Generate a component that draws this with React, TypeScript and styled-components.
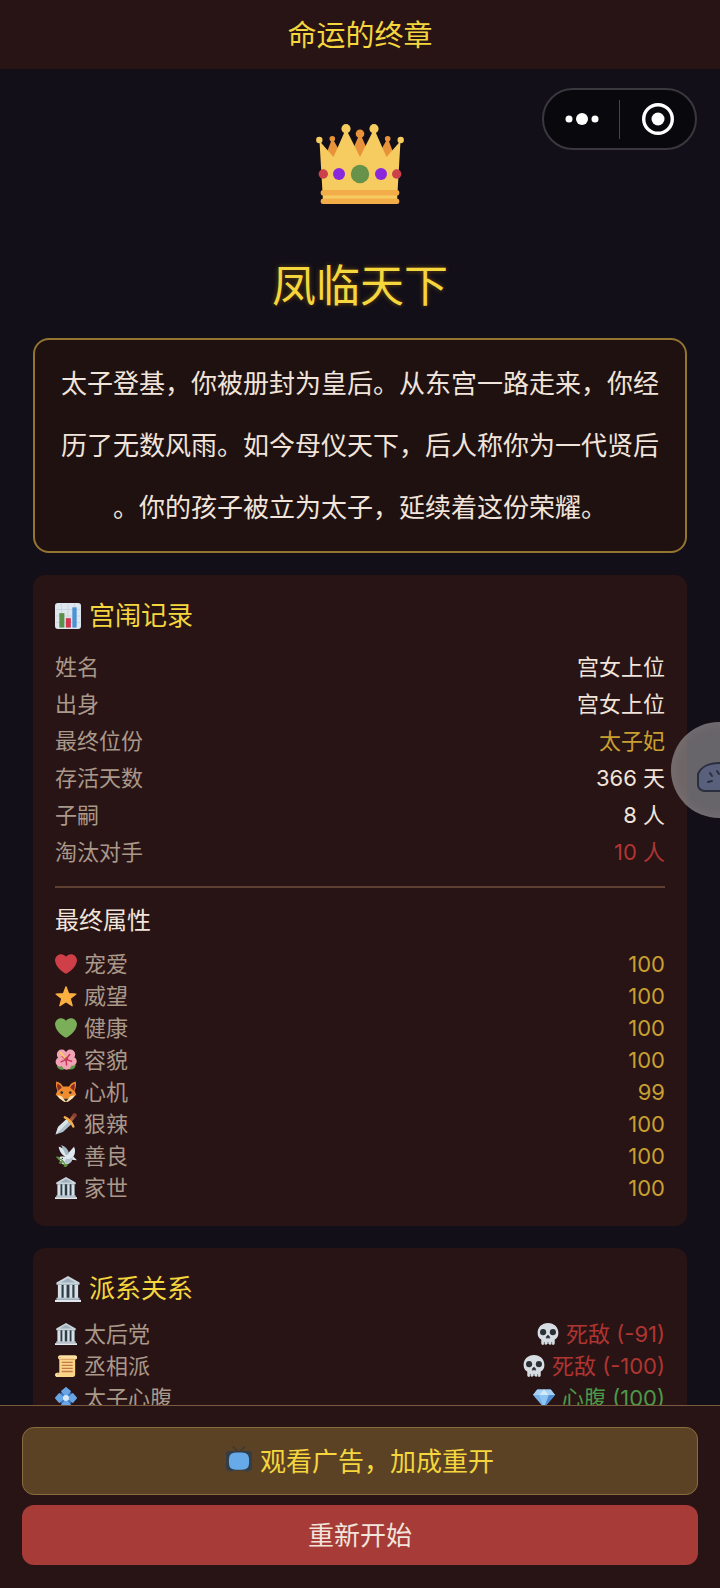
import React from "react";
import styled, { createGlobalStyle } from "styled-components";

const color = {
  page: "#120f18",
  panel: "#281414",
  story: "#201111",
  bright: "#f5d63d",
  gold: "#c9a030",
  text: "#f1e4da",
  muted: "#aa988a",
  red: "#b03532",
  green: "#4c9a48",
  line: "#5d4030",
};

type Tone = "text" | "gold" | "red" | "green";

const GlobalStyle = createGlobalStyle`
  *, *::before, *::after { box-sizing: border-box; }
  html, body, #root { height: 100%; }
  body {
    margin: 0;
    background: ${color.page};
    color: ${color.text};
    font-family: Inter, "Noto Sans CJK SC", sans-serif;
    font-size: 22px;
  }
  h1, h2, h3, p, dl, dd { margin: 0; font-weight: 400; }
  button { font: inherit; border: 0; padding: 0; cursor: pointer; }
`;

const Screen = styled.div`
  position: relative;
  display: flex;
  flex-direction: column;
  height: 100vh;
  overflow: hidden;
`;

const TopBar = styled.header`
  flex: none;
  padding: 16px 0 13px;
  background: ${color.panel};
  color: ${color.bright};
  text-align: center;
`;

const TopTitle = styled.h1`
  font-size: 29px;
  line-height: 40px;
`;

const Content = styled.main`
  flex: 1;
  min-height: 0;
  overflow-y: auto;
  scrollbar-width: none;
  padding: 55px 33px 22px;
`;

const Ending = styled.section`
  display: flex;
  flex-direction: column;
  align-items: center;
`;

const EndingName = styled.h2`
  margin: 50px 0 20px;
  font-size: 44px;
  line-height: 64px;
  color: ${color.bright};
  text-shadow: 0 0 5px rgba(220, 140, 0, 0.45);
`;

const Story = styled.p`
  width: 100%;
  padding: 13px 25px 12px;
  border: 2px solid #94752f;
  border-radius: 16px;
  background: ${color.story};
  font-size: 26px;
  line-height: 62px;
  text-align: center;
  line-break: anywhere;
`;

const Card = styled.section`
  margin-top: 22px;
  padding: 22px;
  border-radius: 12px;
  background: ${color.panel};
`;

const CardTitle = styled.h3`
  display: flex;
  align-items: center;
  gap: 8px;
  font-size: 26px;
  line-height: 37px;
  color: ${color.bright};
`;

const SubTitle = styled.h3`
  margin-top: 15px;
  padding-top: 16px;
  border-top: 2px solid ${color.line};
  font-size: 24px;
  line-height: 34px;
`;

const List = styled.dl<{ $gap: number }>`
  margin-top: ${(p) => p.$gap}px;
`;

const Row = styled.div<{ $height: number }>`
  display: flex;
  justify-content: space-between;
  line-height: ${(p) => p.$height}px;
`;

const Label = styled.dt`
  display: flex;
  align-items: center;
  gap: 7px;
  color: ${color.muted};
`;

const Value = styled.dd<{ $tone: Tone }>`
  display: flex;
  align-items: center;
  gap: 7px;
  color: ${(p) => color[p.$tone]};
`;

const Actions = styled.footer`
  flex: none;
  display: flex;
  flex-direction: column;
  gap: 10px;
  padding: 21px 22px 23px;
  border-top: 1px solid #7a5a3c;
  background: ${color.panel};
`;

const ActionButton = styled.button<{ $primary?: boolean }>`
  display: flex;
  align-items: center;
  justify-content: center;
  gap: 8px;
  height: ${(p) => (p.$primary ? 60 : 68)}px;
  padding-bottom: 4px;
  border: ${(p) => (p.$primary ? "0" : "1px solid #8a6c3c")};
  border-radius: 12px;
  background: ${(p) => (p.$primary ? "#a63b38" : "#5b4224")};
  color: ${(p) => (p.$primary ? color.text : color.bright)};
  font-size: 26px;
`;

const Capsule = styled.div`
  position: absolute;
  top: 88px;
  right: 23px;
  display: flex;
  align-items: center;
  width: 155px;
  height: 62px;
  border: 2px solid #3a383e;
  border-radius: 31px;
  background: #09080d;
`;

const CapsuleButton = styled.button`
  flex: 1;
  display: flex;
  align-items: center;
  justify-content: center;
  height: 100%;
  background: none;
`;

const CapsuleDivider = styled.span`
  width: 1px;
  height: 39px;
  background: #46444a;
`;

const Bubble = styled.button`
  position: absolute;
  top: 722px;
  right: -47px;
  display: flex;
  align-items: center;
  padding: 14px 0 0 26px;
  width: 96px;
  height: 96px;
  border-radius: 50%;
  background: rgba(148, 146, 148, 0.66);
  box-shadow: inset 0 0 12px rgba(160, 150, 150, 0.25);
`;

const Glyph = styled.svg<{ $size: number }>`
  flex: none;
  display: block;
  width: ${(p) => p.$size}px;
  height: ${(p) => p.$size}px;
`;

const HEART =
  "M35.9 11.8c0-5.4-4.4-9.8-9.9-9.8-3.300 0-6.200 1.600-8 4.100C16.200 3.600 13.300 2 10 2 4.500 2 .1 6.400.1 11.800c0 .8.1 1.500.3 2.300C1.800 22.600 11.200 31.600 18 34c6.800-2.400 16.200-11.400 17.600-19.900.2-.8.3-1.500.3-2.300z";

const drawings = {
  chart: (
    <>
      <rect width="36" height="36" rx="4" fill="#dfe7ee" />
      <path d="M1 9h34M1 18h34M1 27h34M9 1v34M18 1v34M27 1v34" stroke="#c3d0db" strokeWidth="1" />
      <path d="M6 14h7v20H6z" fill="#5a9149" />
      <path d="M15 21h7v13h-7z" fill="#d3344f" />
      <path d="M24 6h6v28h-6z" fill="#4c93d6" />
    </>
  ),
  heart: <path d={HEART} fill="#cf3f48" />,
  greenHeart: <path d={HEART} fill="#7bae58" />,
  star: (
    <path
      d="M18 3l4.300 11.200 12 .6-9.400 7.500L28.100 34 18 27.300 7.900 34l3.200-11.700-9.400-7.500 12-.6z"
      fill="#fbb040"
      stroke="#fbb040"
      strokeWidth="2"
      strokeLinejoin="round"
    />
  ),
  flower: (
    <>
      <path d="M3 28c5-2 9 0 12 5-5 2-10 1-12-5zM22 33c2-6 6-8 12-7-1 6-6 9-12 7z" fill="#5d9a45" />
      <g fill="#efa3b4">
        <circle cx="11" cy="9" r="8" />
        <circle cx="25" cy="9" r="8" />
        <circle cx="9" cy="21" r="8" />
        <circle cx="28" cy="20" r="7.500" />
        <circle cx="19" cy="26" r="8" />
      </g>
      <path
        d="M18 17l-6-5M18 17l6-8M18 17l-8 4M18 17l9 3M18 17l1 9"
        stroke="#c9355b"
        strokeWidth="2.500"
        strokeLinecap="round"
      />
      <path d="M16 14L9 6" stroke="#f7cf5c" strokeWidth="3" strokeLinecap="round" />
    </>
  ),
  fox: (
    <>
      <path d="M2 1c5 1 9 4 11 8h10c2-4 6-7 11-8 1 6 0 11-2 15l3 7c-3 1-4 3-6 5l-8 6h-6l-8-6c-2-2-3-4-6-5l3-7C2 12 1 7 2 1z" fill="#f08c2e" />
      <path d="M4 4c4 2 6 4 7 7l-6 5C4 12 3 8 4 4zM32 4c-4 2-6 4-7 7l6 5c1-4 2-8 1-12z" fill="#8c2a25" />
      <path d="M3 24c5-1 9 1 11 5l4 3 4-3c2-4 6-6 11-5-2 1-3 3-5 5l-7 5h-6l-7-5c-2-2-3-4-5-5z" fill="#fbe0b0" />
      <circle cx="11" cy="19" r="2.200" fill="#292f33" />
      <circle cx="25" cy="19" r="2.200" fill="#292f33" />
      <path d="M14 29h8l-4 5z" fill="#292f33" />
    </>
  ),
  dagger: (
    <>
      <path d="M20 9l8 8L13 31 1 35l4-12z" fill="#aebfca" />
      <path d="M20 9l4 4L1 35l4-12z" fill="#d9e4ea" />
      <path d="M25 13l7-9" stroke="#a8573d" strokeWidth="6" strokeLinecap="round" />
      <circle cx="32" cy="4" r="3.500" fill="#8c3f30" />
      <path d="M16 7l5 3 6 6 3 6" fill="none" stroke="#f5b04a" strokeWidth="4" strokeLinecap="round" strokeLinejoin="round" />
    </>
  ),
  dove: (
    <>
      <path d="M6 3c6 1 12 6 14 12L31 3c3 5 2 12-1 16l6 6-8-1c-3 6-8 9-14 8-4-1-4-6-9-9l4-4 8 0C10 16 7 9 6 3z" fill="#dfe8ee" />
      <path d="M10 0c8 3 12 8 13 14l-5 3C15 10 12 5 10 0z" fill="#a9bac7" />
      <path d="M18 22c4 2 8 1 12-3l-3 8c-3 4-8 5-12 3z" fill="#b7c6d2" />
      <path d="M6 23c4 0 8 3 10 9" fill="none" stroke="#5c913b" strokeWidth="2" />
      <path d="M2 19c4 0 6 1 6 4-4 0-6-1-6-4zM6 30c1-4 4-5 7-3 0 3-4 5-7 3zM14 35c1-4 4-5 7-3 0 3-4 5-7 3z" fill="#5c913b" />
      <circle cx="12" cy="22" r="1" fill="#292f33" />
    </>
  ),
  hall: (
    <>
      <path d="M4 11h28v21H4z" fill="#2f3b45" />
      <path d="M18 0L2 9v3h32V9z" fill="#c9d5dd" />
      <path d="M18 3L8 9h20z" fill="#9fb0bc" />
      <path d="M4 12h5v19H4zM12 12h4v19h-4zM20 12h4v19h-4zM27 12h5v19h-5z" fill="#d5e0e7" />
      <path d="M2 30h32v3H2z" fill="#b4c3ce" />
      <path d="M0 33h36v3H0z" fill="#e1e8ed" />
    </>
  ),
  scroll: (
    <>
      <path d="M8 1h25c4 0 4 6 0 6v25c0 3-2 4-4 4H4c-5 0-5-7 0-7h3V6C5 5 5 1 8 1z" fill="#fbd587" />
      <path d="M8 1c-4 0-4 6 0 6h25c4 0 4-6 0-6zM4 29c-5 0-5 7 0 7s5-7 0-7z" fill="#fbe0a4" />
      <path d="M9 7h23M5 32c1-1 0-2-1-1M9 4c-1-1-2 0-1 1" fill="none" stroke="#d5924f" strokeWidth="1.500" />
      <path d="M11 12h18M11 17h18M11 22h18M11 27h18" stroke="#c4794a" strokeWidth="2.200" />
    </>
  ),
  diamondFlower: (
    <>
      <path d="M9 9h18v18H9z" fill="#3a73bb" />
      <g fill="#69a6e6" stroke="#69a6e6" strokeWidth="2" strokeLinejoin="round">
        <path d="M18 1l7 6-7 8-7-8z" />
        <path d="M18 35l7-6-7-8-7 8z" />
        <path d="M1 18l6-7 8 7-8 7z" />
        <path d="M35 18l-6-7-8 7 8 7z" />
      </g>
      <circle cx="18" cy="18" r="5" fill="#d6e9f8" />
    </>
  ),
  skull: (
    <>
      <path d="M18 0C8 0 1 7 1 16c0 6 2 9 6 11v6c0 3 4 4 5 1 1 2 4 2 5 0h2c1 2 4 2 5 0 1 3 5 2 5-1v-6c4-2 6-5 6-11C35 7 28 0 18 0z" fill="#d7dde2" />
      <circle cx="10" cy="15" r="5" fill="#2b3036" />
      <circle cx="26" cy="15" r="5" fill="#2b3036" />
      <path d="M18 20c2 0 4 5 2 5l-2-1-2 1c-2 0 0-5 2-5zM12 31v4M18 31v4M24 31v4" fill="#2b3036" stroke="#2b3036" strokeWidth="1" />
    </>
  ),
  gem: (
    <>
      <path d="M7 4h22l7 9-18 21L0 13z" fill="#78b3ea" />
      <path d="M7 4h22l7 9H0z" fill="#a8d2f5" />
      <path d="M10 13l8-9 8 9-8 21z" fill="#8ec4f2" />
      <path d="M26 13h10L18 34z" fill="#4f8dd0" />
      <path d="M10 13l8-9 8 9z" fill="#d2e9fb" />
    </>
  ),
  tv: (
    <>
      <path d="M18 9L10 1M18 9l8-8" stroke="#3b3838" strokeWidth="2" strokeLinecap="round" />
      <path d="M4 32h6l-1 4H5zM26 32h6l-1 4h-4z" fill="#3a4149" />
      <rect x="0" y="7" width="36" height="27" rx="4" fill="#343c46" />
      <path d="M18 9c11 0 14 2 14 12s-3 12-14 12S4 31 4 21 7 9 18 9z" fill="#66aaea" />
    </>
  ),
};

type IconName = keyof typeof drawings;

const Icon = ({ name, size = 22 }: { name: IconName; size?: number }) => (
  <Glyph $size={size} viewBox="0 0 36 36" fill="none" aria-hidden="true">
    {drawings[name]}
  </Glyph>
);

const Crown = () => (
  <svg width="88" height="80" viewBox="0 0 88 80" aria-hidden="true">
    <g fill="#e8923a">
      <circle cx="16.300" cy="14.700" r="2.800" />
      <circle cx="71.700" cy="14.700" r="2.800" />
      <circle cx="44" cy="9.700" r="4.300" />
      <path d="M16.300 14L11 28l6 7 6-9zM71.700 14L77 28l-6 7-6-9zM44 9l-7 16 7 11 7-11z" />
    </g>
    <g fill="#f6cc60">
      <circle cx="3.300" cy="16" r="3.200" />
      <circle cx="84.700" cy="16" r="3.200" />
      <circle cx="30" cy="4.700" r="4.600" />
      <circle cx="58" cy="4.700" r="4.600" />
      <path d="M3.500 17L17.500 33 28.500 8h3L44 33 56.500 8h3L70.500 33 84.500 17 81 77H7z" />
    </g>
    <g fill="#f2ac48">
      <rect x="4.700" y="66" width="78.600" height="5.400" rx="2.500" />
      <rect x="4.700" y="74.500" width="78.600" height="5.500" rx="2.500" />
    </g>
    <circle cx="7.300" cy="50" r="4.700" fill="#cb4049" />
    <circle cx="80.700" cy="50" r="4.700" fill="#cb4049" />
    <circle cx="23" cy="50" r="6" fill="#8a29dc" />
    <circle cx="65" cy="50" r="6" fill="#8a29dc" />
    <circle cx="44" cy="50" r="9.200" fill="#66924a" />
  </svg>
);

type Entry = { icon?: IconName; label: string; value: string; tone: Tone; mark?: IconName };

const records: Entry[] = [
  { label: "姓名", value: "宫女上位", tone: "text" },
  { label: "出身", value: "宫女上位", tone: "text" },
  { label: "最终位份", value: "太子妃", tone: "gold" },
  { label: "存活天数", value: "366 天", tone: "text" },
  { label: "子嗣", value: "8 人", tone: "text" },
  { label: "淘汰对手", value: "10 人", tone: "red" },
];

const attributes: Entry[] = [
  { icon: "heart", label: "宠爱", value: "100", tone: "gold" },
  { icon: "star", label: "威望", value: "100", tone: "gold" },
  { icon: "greenHeart", label: "健康", value: "100", tone: "gold" },
  { icon: "flower", label: "容貌", value: "100", tone: "gold" },
  { icon: "fox", label: "心机", value: "99", tone: "gold" },
  { icon: "dagger", label: "狠辣", value: "100", tone: "gold" },
  { icon: "dove", label: "善良", value: "100", tone: "gold" },
  { icon: "hall", label: "家世", value: "100", tone: "gold" },
];

const factions: Entry[] = [
  { icon: "hall", label: "太后党", value: "死敌 (-91)", tone: "red", mark: "skull" },
  { icon: "scroll", label: "丞相派", value: "死敌 (-100)", tone: "red", mark: "skull" },
  { icon: "diamondFlower", label: "太子心腹", value: "心腹 (100)", tone: "green", mark: "gem" },
];

const Entries = ({ items, gap, height }: { items: Entry[]; gap: number; height: number }) => (
  <List $gap={gap}>
    {items.map((item) => (
      <Row key={item.label} $height={height}>
        <Label>
          {item.icon && <Icon name={item.icon} />}
          {item.label}
        </Label>
        <Value $tone={item.tone}>
          {item.mark && <Icon name={item.mark} />}
          {item.value}
        </Value>
      </Row>
    ))}
  </List>
);

export default function App() {
  return (
    <Screen>
      <GlobalStyle />
      <TopBar>
        <TopTitle>命运的终章</TopTitle>
      </TopBar>

      <Content>
        <Ending>
          <Crown />
          <EndingName>凤临天下</EndingName>
          <Story>
            太子登基，你被册封为皇后。从东宫一路走来，你经历了无数风雨。如今母仪天下，后人称你为一代贤后。你的孩子被立为太子，延续着这份荣耀。
          </Story>
        </Ending>

        <Card>
          <CardTitle>
            <Icon name="chart" size={26} />
            宫闱记录
          </CardTitle>
          <Entries items={records} gap={15} height={37} />
          <SubTitle>最终属性</SubTitle>
          <Entries items={attributes} gap={10} height={32} />
        </Card>

        <Card>
          <CardTitle>
            <Icon name="hall" size={26} />
            派系关系
          </CardTitle>
          <Entries items={factions} gap={11} height={32} />
        </Card>
      </Content>

      <Actions>
        <ActionButton type="button">
          <Icon name="tv" size={26} />
          观看广告，加成重开
        </ActionButton>
        <ActionButton type="button" $primary>
          重新开始
        </ActionButton>
      </Actions>

      <Capsule>
        <CapsuleButton type="button" aria-label="更多">
          <svg width="34" height="14" viewBox="0 0 34 14" fill="#fff" aria-hidden="true">
            <circle cx="4" cy="7" r="3.500" />
            <circle cx="17" cy="7" r="6" />
            <circle cx="30" cy="7" r="3.500" />
          </svg>
        </CapsuleButton>
        <CapsuleDivider />
        <CapsuleButton type="button" aria-label="关闭">
          <svg width="32" height="32" viewBox="0 0 32 32" fill="none" aria-hidden="true">
            <circle cx="16" cy="16" r="14.300" stroke="#fff" strokeWidth="3.400" />
            <circle cx="16" cy="16" r="6.500" fill="#fff" />
          </svg>
        </CapsuleButton>
      </Capsule>

      <Bubble type="button" aria-label="悬浮助手">
        <svg width="44" height="30" viewBox="0 0 44 30" fill="none" aria-hidden="true">
          <path
            d="M1 12C4 5 12 1 22 1s18 4 21 11v12c0 3-2 5-5 5H7c-4-1-6-3-6-6z"
            fill="#59607c"
            stroke="#2a2e3e"
            strokeWidth="2"
          />
          <path d="M13 11l2 3M20 9l2 3M11 20l4-1" stroke="#2a2e3e" strokeWidth="2" strokeLinecap="round" />
        </svg>
      </Bubble>
    </Screen>
  );
}
